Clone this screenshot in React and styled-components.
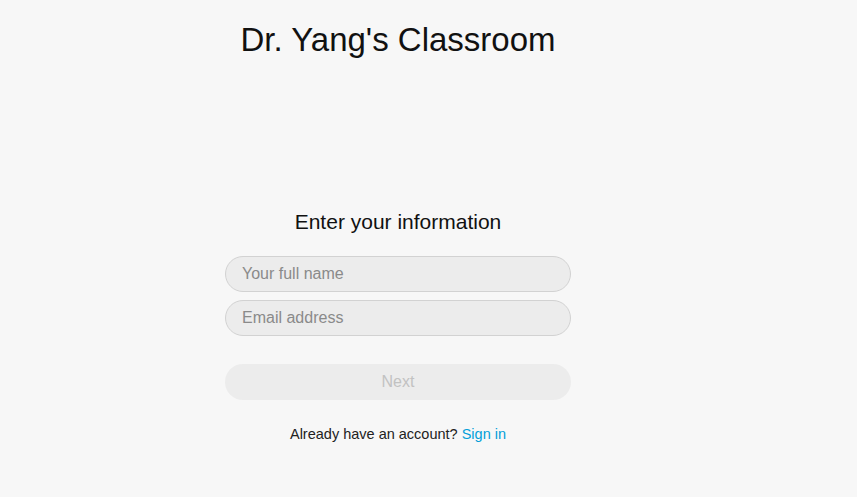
import styled, { createGlobalStyle } from "styled-components";

const Global = createGlobalStyle`
  html, body {
    margin: 0;
    padding: 0;
    background: #f7f7f7;
    font-family: "Liberation Sans", Arial, sans-serif;
  }
`;

const Page = styled.div`
  min-height: 497px;
  display: flex;
  flex-direction: column;
  align-items: center;
  width: 796px;
`;

const Title = styled.h1`
  margin: 21px 0 0;
  font-size: 33px;
  font-weight: 400;
  color: #111;
  line-height: 38px;
`;

const Form = styled.form`
  margin-top: 151px;
  width: 346px;
  display: flex;
  flex-direction: column;
  align-items: center;
`;

const Heading = styled.h2`
  margin: 0 0 22px;
  font-size: 21px;
  font-weight: 400;
  color: #111;
  line-height: 24px;
`;

const Field = styled.input`
  box-sizing: border-box;
  width: 100%;
  height: 36px;
  border-radius: 18px;
  border: 1px solid #d2d2d2;
  background: #ececec;
  padding: 0 16px;
  font-family: inherit;
  font-size: 16px;
  color: #333;
  outline: none;
  margin-bottom: 8px;
  caret-color: #111;

  &::placeholder {
    color: #8a8a8a;
  }
`;

const Button = styled.button`
  box-sizing: border-box;
  width: 100%;
  height: 36px;
  margin-top: 20px;
  border-radius: 18px;
  border: none;
  background: #ececec;
  color: #c2c2c2;
  font-family: inherit;
  font-size: 16px;
`;

const Footer = styled.p`
  margin: 26px 0 0;
  font-size: 14.5px;
  color: #222;

  a {
    color: #049fd9;
    text-decoration: none;
  }
`;

export default function App() {
  return (
    <>
      <Global />
      <Page>
        <Title>Dr. Yang's Classroom</Title>
        <Form onSubmit={(e) => e.preventDefault()}>
          <Heading>Enter your information</Heading>
          <Field placeholder="Your full name" autoFocus />
          <Field placeholder="Email address" type="email" />
          <Button type="submit" disabled>Next</Button>
          <Footer>
            Already have an account? <a href="#">Sign in</a>
          </Footer>
        </Form>
      </Page>
    </>
  );
}
